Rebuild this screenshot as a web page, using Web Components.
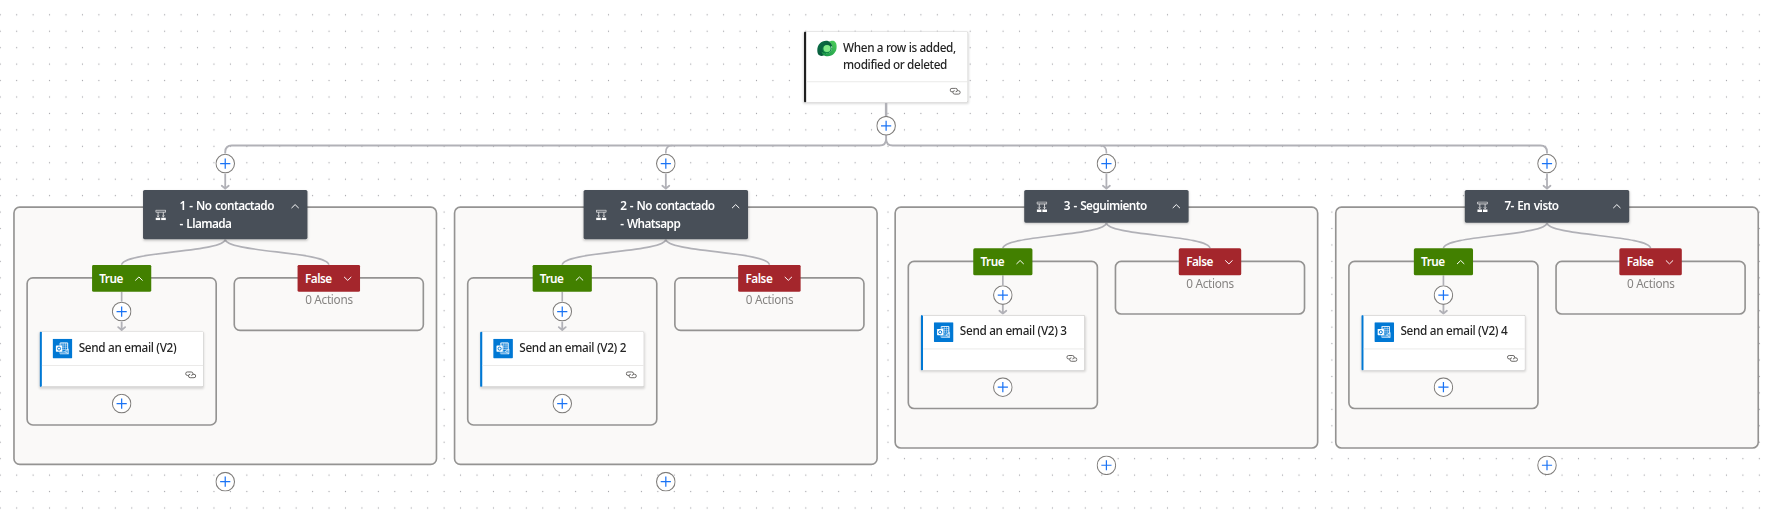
<!DOCTYPE html>
<html lang="es">
<head>
<meta charset="utf-8">
<title>Flow designer</title>
<style>
html,body{margin:0;height:100%;overflow:hidden;background:#fff}
body{font-family:"Noto Sans","Open Sans",sans-serif;color:#242424}
</style>
</head>
<body>
<flow-canvas>
  <flow-card slot="trigger" kind="dataverse">When a row is added,<br>modified or deleted</flow-card>
  <flow-branch lines="2" mail="Send an email (V2)">1 - No contactado<br>- Llamada</flow-branch>
  <flow-branch lines="2" mail="Send an email (V2) 2">2 - No contactado<br>- Whatsapp</flow-branch>
  <flow-branch mail="Send an email (V2) 3">3 - Seguimiento</flow-branch>
  <flow-branch mail="Send an email (V2) 4">7- En visto</flow-branch>
</flow-canvas>
<script>
function define(name, html) {
  customElements.define(name, class extends HTMLElement {
    connectedCallback() {
      if (this.shadowRoot) return;
      const root = this.attachShadow({ mode: 'open' });
      const t = document.createElement('template');
      t.innerHTML = typeof html === 'function' ? html(this) : html;
      root.append(t.content.cloneNode(true));
    }
  });
}

const icons = {
  dataverse: `<svg width="24" height="24" viewBox="0 0 24 24">
    <defs><linearGradient id="l" x1="0" y1="0" x2="1" y2="1"><stop offset="0" stop-color="#0b7448"/><stop offset="1" stop-color="#064a33"/></linearGradient>
    <linearGradient id="r" x1="0" y1="1" x2="1" y2="0"><stop offset="0" stop-color="#149047"/><stop offset="1" stop-color="#4fd05c"/></linearGradient></defs>
    <path d="M2.200 20C.8 18.700.2 16.600.2 14 .2 7.400 5 2.500 11 2.500c4.200 0 7.200 2.700 7.500 6L12 16.800C10 20 7.500 21 5 21c-1.200 0-2.100-.4-2.800-1z" fill="url(#l)"/>
    <path d="M21.800 3.800c1.500 1.300 2.200 3.300 2.200 6 0 6.500-5 11.600-11 11.600-4.500 0-7.300-2.700-7.600-5.800 1.800 1.600 4 2.100 6.300 2.100 4.500 0 6.600-3.600 6.600-7.300 0-3-1.500-5-3.500-6.300C16 3 18 2.500 19.500 2.700c.9.100 1.700.5 2.300 1.100z" fill="url(#r)"/>
    <path d="M6.500 13.500a5.500 5.500 0 0 1 5.500-6.200c3.200 0 5.800 2 6 4.700-.2 3.700-2.600 5.700-6.300 5.700-3 0-4.800-1.700-5.200-4.200z" fill="#0f8a45"/>
    <circle cx="12.100" cy="12" r="4.300" fill="#7fe987"/></svg>`,
  outlook: `<svg width="24" height="24" viewBox="0 0 24 24">
    <rect width="24" height="24" rx="1" fill="#0078d4"/>
    <path d="M9 8.500V5.200h9.300v9.500" fill="none" stroke="#fff" stroke-width="1" opacity=".85"/>
    <path d="M10 5.200h8.300v8H10zM10 7.800h8.300M10 10.400h8.300M12.800 5.200v8M15.600 5.200v8" fill="none" stroke="#fff" stroke-width=".7" opacity=".8"/>
    <path d="M9.500 12.500l5 3 4.700-3v6H8v-2.500" fill="#9fd0f5" opacity=".6"/>
    <path d="M9 18.500h10.200v-6l-4.700 3M14.500 15.500l4.700 3" fill="none" stroke="#fff" stroke-width=".7"/>
    <rect x="4" y="8.300" width="7.600" height="7.600" rx=".6" fill="#fff"/>
    <circle cx="7.800" cy="12.100" r="1.900" fill="none" stroke="#0078d4" stroke-width="1.200"/></svg>`,
  link: `<svg width="14" height="10" viewBox="0 0 14 10" fill="none" stroke="#5c5a58" stroke-width="1.100">
    <path d="M4.300 5.700H3a2.100 2.100 0 0 1 0-4.200H7.600a2.100 2.100 0 0 1 0 4.200"/>
    <path d="M9.700 4.300h1.300a2.100 2.100 0 0 1 0 4.200H6.400a2.100 2.100 0 0 1 0-4.200"/></svg>`,
  condition: `<svg width="13" height="13" viewBox="0 0 13 13" fill="none" stroke="#e6e7e8" stroke-width="1">
    <path d="M.5.700h12v2.400H.5zM3.300 3.100v6M9.700 3.100v6M1.800 7.300l1.500 1.500 1.500-1.500M8.200 7.300l1.500 1.500 1.500-1.500"/>
    <path d="M.3 10h5.600v2.800H.3zM7.100 10h5.600v2.800H7.100z" fill="#fff" stroke="none"/></svg>`,
  up: `<svg width="10" height="6" viewBox="0 0 10 6"><path d="M.5 5.300L5 .9l4.500 4.400" fill="none" stroke="#fff" stroke-width="1.200"/></svg>`,
  down: `<svg width="10" height="6" viewBox="0 0 10 6"><path d="M.5.700L5 5.100 9.500.7" fill="none" stroke="#fff" stroke-width="1.200"/></svg>`
};

define('flow-icon', el => `<style>:host{display:block;flex:none}svg{display:block}</style>${icons[el.getAttribute('name')]}`);

define('flow-plus', `<style>:host{display:block;width:24px;height:24px;flex:none}svg{display:block}</style>
  <svg width="24" height="24" viewBox="0 0 24 24"><circle cx="12" cy="12" r="11.300" fill="#fff" stroke="#7f7d7b" stroke-width="1.300"/>
  <path d="M12 5.800v12.400M5.800 12h12.400" stroke="#1a73f5" stroke-width="1.500"/></svg>`);

define('flow-arrow', el => {
  const h = +el.getAttribute('h');
  return `<style>:host{display:block;width:12px;height:${h}px;flex:none}svg{display:block}</style>
  <svg width="12" height="${h}" viewBox="0 0 12 ${h}" fill="none" stroke="#b1b1b7" stroke-width="2.200">
  <path d="M6 0V${h - 1.500}M1.800 ${h - 5}L6 ${h - 1.500}L10.200 ${h - 5}" stroke-linejoin="round" stroke-linecap="round"/></svg>`;
});

define('flow-card', el => {
  const dv = el.getAttribute('kind') === 'dataverse';
  return `<style>
  :host{display:flex;flex-direction:column;box-sizing:border-box;width:200px;height:${dv ? 87 : 68}px;flex:none;background:#fff;
    border:1px solid #d4d3d2;border-left:3.500px solid ${dv ? '#1f1f1f' : '#0078d4'};border-radius:2px;box-shadow:0 1.500px 3px rgba(0,0,0,.14)}
  .main{display:flex;flex:1;padding:8px 0 0 12.500px;gap:8px}
  .t{font-size:14.300px;line-height:20.900px;font-weight:500;letter-spacing:${dv ? -.45 : -.38}px;white-space:nowrap;padding-top:${dv ? .9 : 1.200}px}
  .foot{display:flex;height:25.500px;border-top:1px solid #e6e5e4;justify-content:flex-end;padding:6px 8px 0 0;box-sizing:border-box}
  </style><div class="main"><flow-icon name="${dv ? 'dataverse' : 'outlook'}"></flow-icon><div class="t"><slot></slot></div></div>
  <div class="foot"><flow-icon name="link"></flow-icon></div>`;
});

define('flow-header', el => {
  const two = el.getAttribute('lines') === '2';
  return `<style>
  :host{display:flex;box-sizing:border-box;position:relative;z-index:1;width:200px;height:${two ? 60 : 40}px;flex:none;background:#484f58;color:#fff;
    border-radius:2px;box-shadow:0 1.500px 3px rgba(0,0,0,.18);padding:0 10px 0 15px}
  .i{align-self:center}
  .t{flex:1;padding:8.900px 0 0 ${two ? 16.300 : 20}px;font-size:14.300px;line-height:21px;font-weight:650;letter-spacing:-.67px;word-spacing:1.200px;white-space:nowrap}
  .c{margin-top:17px}
  </style><flow-icon class="i" name="condition"></flow-icon><div class="t"><slot></slot></div><flow-icon class="c" name="up"></flow-icon>`;
});

define('flow-tag', el => {
  const yes = el.getAttribute('value') === 'True';
  return `<style>
  :host{display:flex;box-sizing:border-box;position:relative;z-index:1;width:${yes ? 72.500 : 76}px;height:32.500px;flex:none;align-items:center;
    justify-content:space-between;padding:0 10px 0 8.800px;border-radius:2px;background:${yes ? '#428000' : '#a4262c'};color:#fff;
    font-size:14.300px;font-weight:650;letter-spacing:-.6px}
  </style><span>${yes ? 'True' : 'False'}</span><flow-icon name="${yes ? 'up' : 'down'}"></flow-icon>`;
});

define('flow-lane', el => `<style>
  :host{display:flex;flex-direction:column;align-items:center;width:232px}
  .box{display:flex;flex-direction:column;align-items:center;box-sizing:border-box;width:232px;margin-top:-17.500px;
    border:2px solid #949392;border-radius:8px;min-height:65.500px;padding-top:15.500px}
  </style><flow-tag value="${el.getAttribute('value')}"></flow-tag><div class="box"><slot></slot></div>`);

define('flow-branch', el => {
  const two = el.getAttribute('lines') === '2';
  return `<style>
  :host{display:flex;flex-direction:column;align-items:center;width:516px}
  .scope{display:flex;flex-direction:column;box-sizing:border-box;width:516px;margin-top:${two ? -40 : -20}px;
    padding:${two ? 38 : 18}px 14px 46px;border:2px solid #949392;border-radius:8px;background:#faf9f8}
  .fork{display:block}
  .lanes{display:flex;justify-content:space-between;align-items:flex-start}
  .stem{width:2px;height:12px;background:#b1b1b7}
  .after{margin:8px 0 13px}
  .out{margin-top:8.500px}
  .none{font-size:14.300px;line-height:20.600px;letter-spacing:-.36px;color:#868482}
  </style>
  <flow-plus></flow-plus><flow-arrow h="20"></flow-arrow>
  <flow-header lines="${two ? 2 : 1}"><slot></slot></flow-header>
  <div class="scope">
    <svg class="fork" width="484" height="31.300" viewBox="0 0 484 31.300" fill="none" stroke="#b1b1b7" stroke-width="2">
      <path d="M242 0C242 16 116 15 116 31.300M242 0C242 16 368 15 368 31.300"/></svg>
    <div class="lanes">
      <flow-lane value="True"><div class="stem"></div><flow-plus></flow-plus><flow-arrow h="12"></flow-arrow>
        <flow-card kind="outlook">${el.getAttribute('mail')}</flow-card><flow-plus class="after"></flow-plus></flow-lane>
      <flow-lane value="False"><div class="none">0 Actions</div></flow-lane>
    </div>
  </div>
  <flow-plus class="out"></flow-plus>`;
});

define('flow-canvas', `<style>
  :host{display:block;width:100%;height:100%;overflow:hidden;contain:strict}
  .zoomed{position:relative;width:calc(100% / .822);height:calc(100% / .822);overflow:hidden;transform:scale(.822);transform-origin:0 0}
  .grid{position:absolute;inset:0;width:100%;height:100%}
  .flow{position:relative;display:flex;flex-direction:column;align-items:center;padding-top:38px;width:2156.400px;box-sizing:border-box}
  .trunk{display:grid;justify-items:center;width:2124px;height:62px}
  .trunk>*{grid-area:1/1}
  .trunk flow-plus{margin-top:16px;position:relative}
  .row{display:flex;gap:20px}
  </style>
  <div class="zoomed">
  <svg class="grid"><defs><pattern id="d" width="20" height="20" patternUnits="userSpaceOnUse" x="-9.700" y="8"><circle cx="10" cy="10" r=".75" fill="#a2a2a8"/></pattern></defs><rect width="100%" height="100%" fill="url(#d)"/></svg>
  <div class="flow">
    <slot name="trigger"></slot>
    <div class="trunk">
      <svg width="2124" height="62" viewBox="0 0 2124 62" fill="none" stroke="#b1b1b7" stroke-width="2">
        <path d="M1062 0V40" stroke-width="3"/>
        <path d="M1062 38V44Q1062 52 1054 52H266Q258 52 258 60V62M1062 38V44Q1062 52 1070 52H1858Q1866 52 1866 60V62" stroke-width="2.300"/>
        <path d="M802 52Q794 52 794 60V62M1322 52Q1330 52 1330 60V62"/></svg>
      <flow-plus></flow-plus>
    </div>
    <div class="row"><slot></slot></div>
  </div></div>`);
</script>
</body>
</html>
